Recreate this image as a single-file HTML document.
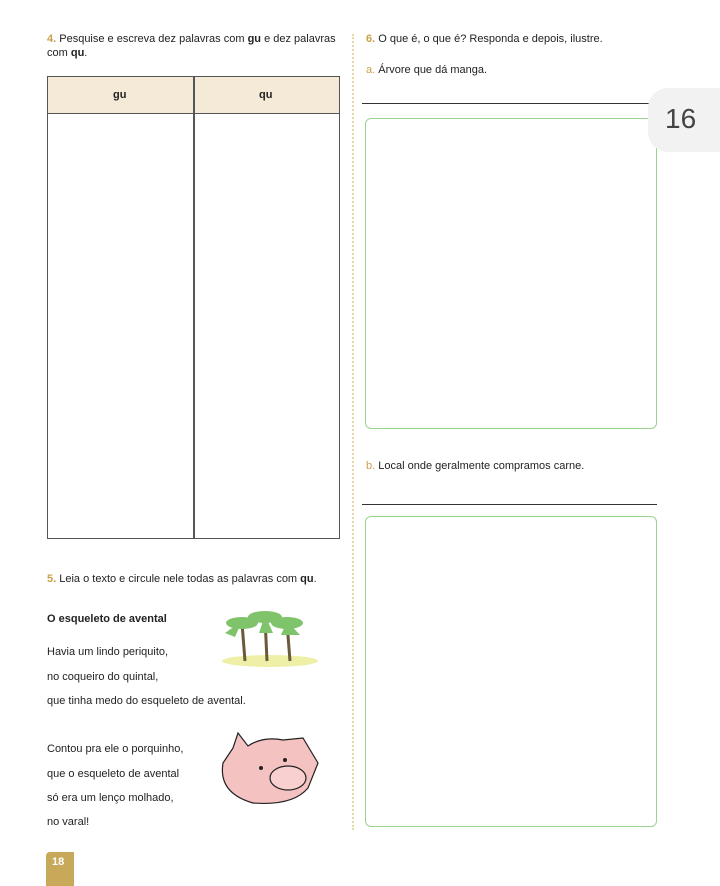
<!DOCTYPE html>
<html><head><meta charset="utf-8"><style>
body{margin:0;width:720px;height:886px;background:#fff;position:relative;font-family:"Liberation Sans",sans-serif;color:#222;overflow:hidden}
.t{position:absolute;font-size:11px;white-space:nowrap}
.n{color:#c9a14a;font-weight:bold}
.l{color:#c9a14a}
b{font-weight:bold}
.box{position:absolute;border:1.5px solid #9bd391;border-radius:6px}
.hl{position:absolute;height:1px;background:#333}
</style></head><body>
<div class="t" style="left:47px;top:33px"><span class="n">4.</span> Pesquise e escreva dez palavras com <b>gu</b> e dez palavras</div>
<div class="t" style="left:47px;top:47px">com <b>qu</b>.</div>
<div style="position:absolute;left:47px;top:76px;width:293px;height:463px;border:1.5px solid #555;box-sizing:border-box"></div>
<div style="position:absolute;left:48px;top:77px;width:291px;height:36px;background:#f5ead8;border-bottom:1.5px solid #555"></div>
<div style="position:absolute;left:193px;top:77px;width:1.5px;height:462px;background:#555"></div>
<div class="t" style="left:113px;top:89px;font-weight:bold">gu</div>
<div class="t" style="left:259px;top:89px;font-weight:bold">qu</div>
<div style="position:absolute;left:352px;top:34px;height:796px;border-left:2px dotted #e6d9a8"></div>
<div class="t" style="left:366px;top:33px"><span class="n">6.</span> O que é, o que é? Responda e depois, ilustre.</div>
<div class="t" style="left:366px;top:64px"><span class="l">a.</span> Árvore que dá manga.</div>
<div class="hl" style="left:362px;top:103px;width:295px"></div>
<div class="box" style="left:365px;top:118px;width:290px;height:309px"></div>
<div class="t" style="left:366px;top:460px"><span class="l">b.</span> Local onde geralmente compramos carne.</div>
<div class="hl" style="left:362px;top:504px;width:295px"></div>
<div class="box" style="left:365px;top:516px;width:290px;height:309px"></div>
<div style="position:absolute;left:648px;top:88px;width:80px;height:64px;background:#f2f2f2;border-radius:20px 0 0 20px"></div>
<div class="t" style="left:665px;top:103px;font-size:28px;color:#444">16</div>
<div class="t" style="left:47px;top:573px"><span class="n">5.</span> Leia o texto e circule nele todas as palavras com <b>qu</b>.</div>
<div class="t" style="left:47px;top:613px;font-weight:bold">O esqueleto de avental</div>
<div class="t" style="left:47px;top:646px">Havia um lindo periquito,</div>
<div class="t" style="left:47px;top:671px">no coqueiro do quintal,</div>
<div class="t" style="left:47px;top:695px">que tinha medo do esqueleto de avental.</div>
<div class="t" style="left:47px;top:743px">Contou pra ele o porquinho,</div>
<div class="t" style="left:47px;top:768px">que o esqueleto de avental</div>
<div class="t" style="left:47px;top:792px">só era um lenço molhado,</div>
<div class="t" style="left:47px;top:816px">no varal!</div>
<svg style="position:absolute;left:215px;top:603px" width="110" height="65">
<ellipse cx="55" cy="58" rx="48" ry="6" fill="#eef0a8"/>
<g stroke="#6a5a3a" stroke-width="3" fill="none"><path d="M30 58 L27 20"/><path d="M52 58 L50 15"/><path d="M75 58 L72 20"/></g>
<g fill="#7fc46a"><ellipse cx="27" cy="20" rx="16" ry="6"/><ellipse cx="50" cy="14" rx="17" ry="6"/><ellipse cx="72" cy="20" rx="16" ry="6"/><path d="M10 30 L27 18 L20 34Z"/><path d="M44 30 L50 12 L58 30Z"/><path d="M85 32 L72 18 L66 32Z"/></g>
</svg>
<svg style="position:absolute;left:213px;top:718px" width="110" height="90">
<path d="M20 30 L10 45 Q5 75 40 85 Q80 88 95 70 L105 45 L90 20 L70 22 Q50 18 35 28 L25 15 Z" fill="#f5c2c2" stroke="#222" stroke-width="1.2"/>
<ellipse cx="75" cy="60" rx="18" ry="12" fill="#f8d0d0" stroke="#222" stroke-width="1.2"/>
<circle cx="48" cy="50" r="2" fill="#222"/><circle cx="72" cy="42" r="2" fill="#222"/>
</svg>
<div style="position:absolute;left:46px;top:852px;width:28px;height:34px;background:#c8a95a;border-radius:4px 0 0 0"></div>
<div class="t" style="left:52px;top:856px;font-size:11px;color:#fff;font-weight:bold">18</div>
</body></html>
